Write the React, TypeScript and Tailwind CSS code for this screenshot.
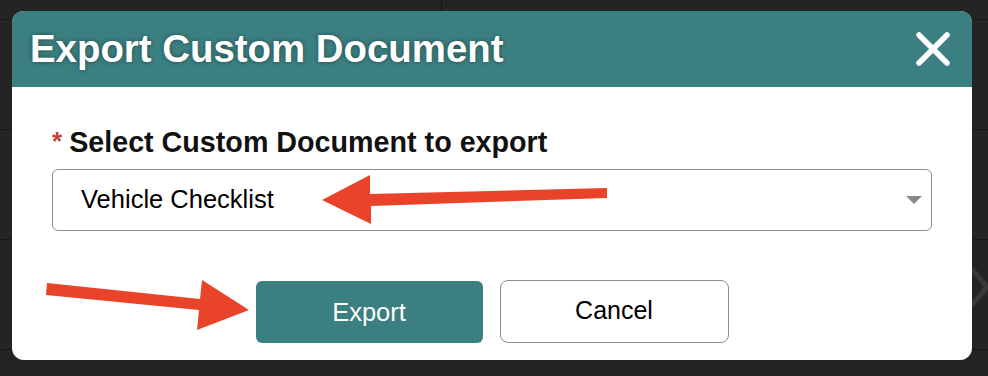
import React from 'react';

const font = { fontFamily: '"Liberation Sans", Arial, sans-serif' };

function Backdrop() {
  return (
    <div className="flex flex-col h-full bg-[#242424]">
      <div className="flex h-[20px] border-b border-[#181818]">
        <div className="w-[442px] border-r border-[#141414]" />
        <div className="flex-1" />
      </div>
      <div className="h-[110px] border-b border-[#181818]" />
      <div className="h-[110px] border-b border-[#181818]" />
      <div className="h-[110px] border-b border-[#181818] flex justify-end items-start pt-[27px]">
        <svg width="18" height="42" viewBox="0 0 18 42">
          <polyline points="3,3 17,20 3,37" fill="none" stroke="#383838" strokeWidth="5" strokeLinecap="round" strokeLinejoin="round" />
        </svg>
      </div>
      <div className="flex-1" />
    </div>
  );
}

function Arrows() {
  return (
    <svg className="absolute inset-0 pointer-events-none" width="988" height="376" viewBox="0 0 988 376">
      <polygon points="607,188 607,198 371,206 371,224 322,200 370,175 370,194" fill="#e9432a" />
      <polygon points="47,283 200,299 202,280 249,310 197,330 199,310 46,295" fill="#e9432a" />
    </svg>
  );
}

export default function App() {
  return (
    <div className="relative w-[988px] h-[376px] overflow-hidden" style={font}>
      <Backdrop />
      <div className="absolute inset-0 pl-[12px] pt-[11px]">
        <div className="w-[960px] h-[349px] bg-white rounded-[12px] overflow-hidden flex flex-col">
          <div className="h-[76px] bg-[#3b7f80] flex items-center justify-between pl-[18px] pr-[21px]">
            <h1 className="text-white font-bold text-[38.4px] leading-none [text-shadow:0_0_4px_rgba(0,0,0,0.45)]">
              Export Custom Document
            </h1>
            <button className="w-[36px] h-[36px] flex items-center justify-center">
              <svg width="36" height="36" viewBox="0 0 36 36">
                <path d="M4 4 L32 32 M32 4 L4 32" stroke="#fff" strokeWidth="5.5" strokeLinecap="round" />
              </svg>
            </button>
          </div>
          <div className="flex flex-col px-[40px] pt-[41px]">
            <label className="flex items-start leading-none">
              <span className="text-[#c4423a] text-[26px] font-bold mr-[7px] leading-none">*</span>
              <span className="text-[#111] font-bold text-[28.7px] leading-none">Select Custom Document to export</span>
            </label>
            <div className="mt-[12px] h-[62px] border border-[#8c8c8c] rounded-[6px] flex items-center justify-between pl-[28px] pr-[9px]">
              <span className="text-black text-[25.5px] leading-none">Vehicle Checklist</span>
              <svg width="16" height="8" viewBox="0 0 16 8">
                <polygon points="0,0 16,0 8,8" fill="#8a8a8a" />
              </svg>
            </div>
            <div className="mt-[50px] flex justify-center gap-[17px]">
              <button className="w-[227px] h-[62px] bg-[#3b7f80] rounded-[6px] text-white text-[25.5px]">
                Export
              </button>
              <button className="w-[229px] h-[63px] -mt-px bg-white border border-[#8c8c8c] rounded-[8px] text-black text-[25px]">
                Cancel
              </button>
            </div>
          </div>
        </div>
      </div>
      <Arrows />
    </div>
  );
}
